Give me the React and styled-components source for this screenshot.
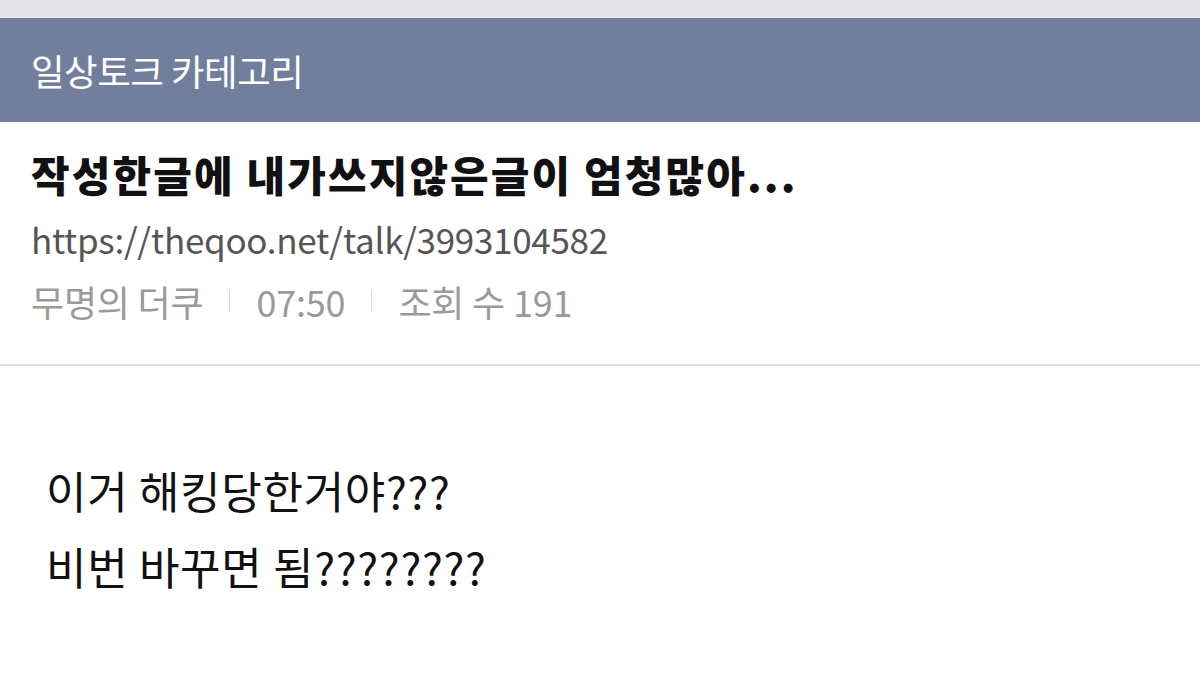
import React from "react";
import styled, { createGlobalStyle } from "styled-components";

const GlobalStyle = createGlobalStyle`
  html, body {
    margin: 0;
    padding: 0;
    background: #ffffff;
    font-family: "Noto Sans CJK KR", "Noto Sans", sans-serif;
  }
`;

const Page = styled.div`
  width: 1200px;
  height: 682px;
  overflow: hidden;
  background: #ffffff;
`;

const TopStrip = styled.div`
  height: 18px;
  background: #e4e3e7;
`;

const CategoryBar = styled.div`
  height: 104px;
  background: #717f9d;
  display: flex;
  align-items: center;
  padding: 0 31px;
  box-sizing: border-box;
`;

const CategoryTitle = styled.h1`
  margin: 0;
  color: #ffffff;
  font-size: 36.5px;
  font-weight: 400;
  letter-spacing: -0.5px;
`;

const PostHeader = styled.div`
  padding: 16px 31px 0;
  height: 244px;
  box-sizing: border-box;
  border-bottom: 2px solid #e0e0e0;
`;

const PostTitle = styled.h2`
  margin: 0;
  color: #111111;
  font-size: 42px;
  font-weight: 800;
  line-height: 72px;
  letter-spacing: 2.1px;
`;

const PostUrl = styled.div`
  color: #555555;
  font-size: 35px;
  line-height: 58px;
  letter-spacing: -0.3px;
`;

const Meta = styled.div`
  display: flex;
  align-items: center;
  color: #9a9a9a;
  font-size: 36px;
  line-height: 66px;
  letter-spacing: -0.2px;
`;

const Sep = styled.span`
  width: 1px;
  height: 22px;
  background: #d6d6d6;
  margin: 0 26px;
`;

const Body = styled.div`
  padding: 86px 46px 0;
  color: #111111;
  font-size: 44px;
  line-height: 76px;
  letter-spacing: 0.7px;
`;

export default function App() {
  return (
    <Page>
      <GlobalStyle />
      <TopStrip />
      <CategoryBar>
        <CategoryTitle>일상토크 카테고리</CategoryTitle>
      </CategoryBar>
      <PostHeader>
        <PostTitle>작성한글에 내가쓰지않은글이 엄청많아...</PostTitle>
        <PostUrl>https://theqoo.net/talk/3993104582</PostUrl>
        <Meta>
          <span>무명의 더쿠</span>
          <Sep />
          <span>07:50</span>
          <Sep />
          <span>조회 수 191</span>
        </Meta>
      </PostHeader>
      <Body>
        <div>이거 해킹당한거야???</div>
        <div>비번 바꾸면 됨????????</div>
      </Body>
    </Page>
  );
}
